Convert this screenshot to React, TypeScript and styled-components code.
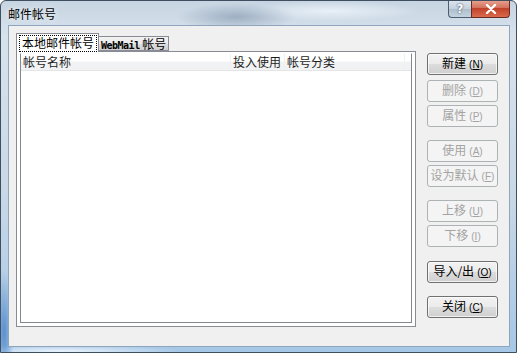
import styled, { createGlobalStyle } from "styled-components";

const GlobalStyle = createGlobalStyle`
  html, body {
    margin: 0;
    padding: 0;
    background: #ffffff;
  }
  body {
    font-family: "Noto Sans CJK SC", "DejaVu Sans", sans-serif;
  }
`;

const columns = [
  { label: "帐号名称", width: 210 },
  { label: "投入使用", width: 54 },
  { label: "帐号分类", width: 120 },
];

const buttons = [
  { label: "新建", key: "N", space: 0, disabled: false },
  { label: "删除", key: "D", space: 5, disabled: true },
  { label: "属性", key: "P", space: 3, disabled: true },
  { label: "使用", key: "A", space: 13, disabled: true },
  { label: "设为默认", key: "F", space: 3, disabled: true },
  { label: "上移", key: "U", space: 13, disabled: true },
  { label: "下移", key: "I", space: 3, disabled: true },
  { label: "导入/出", key: "O", space: 14, disabled: false },
  { label: "关闭", key: "C", space: 13, disabled: false },
];

const App = () => {
  return (
    <>
      <GlobalStyle />
      <Window>
        <TitleBar>
          <Title>邮件帐号</Title>
          <CaptionButtons>
            <HelpButton>?</HelpButton>
            <CloseButton>
              <svg width="12" height="10" viewBox="0 0 12 10">
                <path
                  d="M2 1 L10 9 M10 1 L2 9"
                  stroke="#ffffff"
                  strokeWidth="2.4"
                  strokeLinecap="round"
                />
              </svg>
            </CloseButton>
          </CaptionButtons>
        </TitleBar>
        <Client>
          <LeftColumn>
            <TabStrip>
              <Tab $active>
                <FocusRect>本地邮件帐号</FocusRect>
              </Tab>
              <Tab>
                <TabLabel>
                  <Mono>WebMail</Mono>
                  {" 帐号"}
                </TabLabel>
              </Tab>
            </TabStrip>
            <TabPanel>
              <ListView>
                <Header>
                  {columns.map((c) => (
                    <HeaderCell key={c.label} $width={c.width}>
                      {c.label}
                    </HeaderCell>
                  ))}
                </Header>
              </ListView>
            </TabPanel>
          </LeftColumn>
          <ButtonColumn>
            {buttons.map((b) => (
              <PushButton key={b.label} $space={b.space} disabled={b.disabled}>
                {b.label}
                <Accel>
                  (<u>{b.key}</u>)
                </Accel>
              </PushButton>
            ))}
          </ButtonColumn>
        </Client>
      </Window>
    </>
  );
};

const Window = styled.div`
  width: 517px;
  height: 353px;
  box-sizing: border-box;
  display: flex;
  flex-direction: column;
  border: 1px solid #3f4f60;
  border-radius: 6px 6px 0 0;
  background:
    radial-gradient(ellipse 60px 14px at 235px 16px, rgba(120, 140, 165, 0.55), transparent),
    radial-gradient(ellipse 90px 10px at 330px 10px, rgba(235, 242, 250, 0.9), transparent),
    radial-gradient(ellipse 10px 60px at 3px 330px, rgba(70, 130, 200, 0.8), transparent),
    radial-gradient(ellipse 120px 6px at 60px 350px, rgba(240, 248, 255, 0.9), transparent),
    linear-gradient(180deg, #c7d5e2 0%, #d7e2ec 10%, #c9d8e7 55%, #a6c7e6 100%);
  overflow: hidden;
`;

const TitleBar = styled.div`
  height: 24px;
  flex: none;
  display: flex;
  justify-content: space-between;
  align-items: flex-start;
  padding-left: 7px;
`;

const Title = styled.div`
  margin-top: 5px;
  font-size: 12px;
  line-height: 16px;
  color: #000000;
  text-shadow: 0 0 6px rgba(255, 255, 255, 0.9);
`;

const CaptionButtons = styled.div`
  display: flex;
  margin-right: 6px;
  margin-top: -1px;
`;

const CaptionButton = styled.div`
  height: 18px;
  box-sizing: border-box;
  display: flex;
  align-items: center;
  justify-content: center;
  border: 1px solid #4d5d6f;
  border-top: none;
  font-family: "DejaVu Sans", sans-serif;
  font-weight: bold;
  font-size: 12px;
  color: #ffffff;
`;

const HelpButton = styled(CaptionButton)`
  width: 23px;
  border-radius: 0 0 0 4px;
  border-right: none;
  background: linear-gradient(180deg, #dde6ee 0%, #c5d2de 50%, #aebdcb 51%, #c4d3e0 100%);
  color: #ffffff;
  text-shadow: 0 0 2px #4b5b6c, 0 0 1px #4b5b6c;
`;

const CloseButton = styled(CaptionButton)`
  width: 39px;
  border-radius: 0 0 4px 0;
  border-color: #6b2a22;
  background: linear-gradient(180deg, #e8a594 0%, #d4735e 45%, #c2412a 50%, #d86a4d 100%);
`;

const Client = styled.div`
  flex: 1;
  margin: 0 6px 5px 7px;
  display: flex;
  padding: 8px 0 0 7px;
  background: #f0f0f0;
  border: 1px solid #8ea5bb;
`;

const LeftColumn = styled.div`
  width: 400px;
  display: flex;
  flex-direction: column;
`;

const TabStrip = styled.div`
  height: 18px;
  display: flex;
  align-items: flex-end;
  margin-bottom: -1px;
  position: relative;
  z-index: 1;
`;

const Tab = styled.div<{ $active?: boolean }>`
  box-sizing: border-box;
  height: ${(p) => (p.$active ? "19px" : "15px")};
  padding: ${(p) => (p.$active ? "2px 2px 0 3px" : "0 2px 0 2px")};
  margin-bottom: ${(p) => (p.$active ? "0" : "1px")};
  border: 1px solid #898c95;
  border-bottom: ${(p) => (p.$active ? "none" : "1px solid #898c95")};
  border-left: ${(p) => (p.$active ? "1px solid #898c95" : "none")};
  background: ${(p) =>
    p.$active ? "#ffffff" : "linear-gradient(180deg, #f2f2f2 0%, #ebebeb 50%, #dddddd 51%, #cfcfcf 100%)"};
  font-size: 12px;
  line-height: 13px;
  color: #000000;
  white-space: nowrap;
  display: flex;
  align-items: flex-start;
`;

const TabLabel = styled.span`
  white-space: pre;
`;

const FocusRect = styled.span`
  outline: 1px dotted #000000;
  outline-offset: 0;
  padding: 0 2px 1px 2px;
  line-height: 14px;
`;

const Mono = styled.span`
  font-family: "DejaVu Sans Mono", monospace;
  font-weight: bold;
  font-size: 10px;
  letter-spacing: -0.5px;
`;

const TabPanel = styled.div`
  height: 276px;
  box-sizing: border-box;
  border: 1px solid #898c95;
  background: #ffffff;
  padding: 1px 3px 3px 3px;
  display: flex;
`;

const ListView = styled.div`
  flex: 1;
  border: 1px solid #828790;
  border-top-color: #ffffff;
  background: #ffffff;
`;

const Header = styled.div`
  height: 16px;
  display: flex;
  background: linear-gradient(180deg, #ffffff 0%, #ffffff 45%, #f1f2f4 50%, #f1f2f4 100%);
  border-bottom: 1px solid #e5e5e5;
`;

const HeaderCell = styled.div<{ $width: number }>`
  width: ${(p) => p.$width}px;
  flex: none;
  box-sizing: border-box;
  padding-left: 2px;
  font-size: 12px;
  line-height: 16px;
  color: #1e1e1e;
  border-right: 1px solid #f0f0f0;
`;

const ButtonColumn = styled.div`
  display: flex;
  flex-direction: column;
  margin-left: 11px;
  padding-top: 19px;
  width: 71px;
`;

const PushButton = styled.button<{ $space: number }>`
  height: 22px;
  margin-top: ${(p) => p.$space}px;
  padding: 0;
  border: 1px solid #707070;
  border-radius: 3px;
  background: linear-gradient(180deg, #f2f2f2 0%, #ebebeb 50%, #dddddd 51%, #cfcfcf 100%);
  box-shadow: inset 0 0 0 1px rgba(255, 255, 255, 0.7);
  font-family: "Noto Sans CJK SC", "DejaVu Sans", sans-serif;
  font-size: 12px;
  line-height: 18px;
  color: #000000;
  white-space: nowrap;

  &:disabled {
    border-color: #adb2b5;
    background: #f4f4f4;
    box-shadow: none;
    color: #a3a3a3;
  }
`;

const Accel = styled.span`
  margin-left: 3px;
  font-family: "Liberation Sans", sans-serif;
  font-size: 10px;
`;

export default App;
